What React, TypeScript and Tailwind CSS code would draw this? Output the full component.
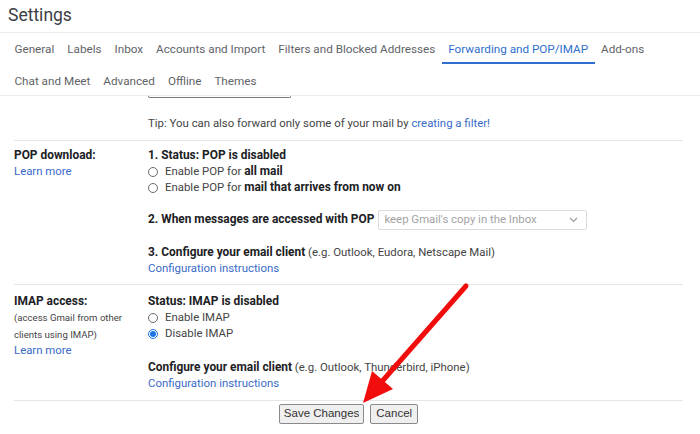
import React from "react";

const body = { fontFamily: 'Roboto, "Liberation Sans", Arial, sans-serif' };
const btn = { fontFamily: '"Liberation Sans", Arial, sans-serif' };

const tabsRow1 = [
  "General",
  "Labels",
  "Inbox",
  "Accounts and Import",
  "Filters and Blocked Addresses",
  "Forwarding and POP/IMAP",
  "Add-ons",
];
const tabsRow2 = ["Chat and Meet", "Advanced", "Offline", "Themes"];
const ACTIVE = "Forwarding and POP/IMAP";

function Tab({ label, second }: { label: string; second?: boolean }) {
  const active = label === ACTIVE;
  return (
    <div
      className={
        "h-[31px] px-[6.5px] flex items-center text-[11.7px] border-b-2 " +
        (second ? "pt-[6px] " : "pt-[5px] ") +
        (active ? "text-[#2f6fcf] border-[#2f6fcf]" : "text-[#5f6368] border-transparent")
      }
    >
      {label}
    </div>
  );
}

function Radio({ checked }: { checked?: boolean }) {
  return checked ? (
    <span className="w-[10px] h-[10px] rounded-full border border-[#1a73e8] flex items-center justify-center shrink-0">
      <span className="w-[6px] h-[6px] rounded-full bg-[#1a73e8]" />
    </span>
  ) : (
    <span className="w-[10px] h-[10px] rounded-full border border-[#6b6b6b] shrink-0" />
  );
}

function RadioRow({ checked, children }: { checked?: boolean; children: React.ReactNode }) {
  return (
    <div className="h-4 flex items-center gap-[7px]">
      <Radio checked={checked} />
      <span>{children}</span>
    </div>
  );
}

function B({ children }: { children: React.ReactNode }) {
  return <b className="text-[11.9px]">{children}</b>;
}

const link = "text-[#3a6bc8]";

export default function App() {
  return (
    <div className="relative w-[700px] h-[434px] bg-white overflow-hidden text-[#202124]" style={body}>
      {/* header */}
      <div className="h-[33px] border-b border-[#ececec] pl-[8px] flex items-center">
        <span className="text-[17.5px] text-[#3c4043] leading-none">Settings</span>
      </div>

      {/* tabs */}
      <div className="border-b border-[#ececec] pl-[8px]">
        <div className="flex">
          {tabsRow1.map((t) => (
            <Tab key={t} label={t} />
          ))}
        </div>
        <div className="flex">
          {tabsRow2.map((t) => (
            <Tab key={t} label={t} second />
          ))}
        </div>
      </div>

      {/* scrolled settings body */}
      <div className="pl-[14px] pr-[17px] text-[11.4px]">
        {/* bottom edge of the forwarding address picker, scrolled up under the tabs */}
        <div className="ml-[134px] w-[143px] h-[2px] border-x border-b border-[#7a7a7a] rounded-b-[3px]" />

        <div className="pl-[134px] h-4 flex items-center mt-[18px]">
          <span className="text-[#444]">
            Tip: You can also forward only some of your mail by{" "}
            <span className={link}>creating a filter!</span>
          </span>
        </div>

        {/* POP */}
        <div className="mt-[8px] border-t border-[#e6e6e6] pt-[7px] pb-[7px] flex">
          <div className="w-[134px] shrink-0">
            <div className="h-4 flex items-center">
              <B>POP download:</B>
            </div>
            <div className={"h-4 flex items-center " + link}>Learn more</div>
          </div>
          <div className="flex-1">
            <div className="h-4 flex items-center">
              <B>1. Status: POP is disabled</B>
            </div>
            <RadioRow>
              <span className="text-[#444]">Enable POP for </span>
              <B>all mail</B>
            </RadioRow>
            <RadioRow>
              <span className="text-[#444]">Enable POP for </span>
              <B>mail that arrives from now on</B>
            </RadioRow>
            <div className="mt-[14px] h-[20px] flex items-center gap-[4px]">
              <B>2. When messages are accessed with POP</B>
              <div className="w-[209px] h-[20px] border border-[#dcdcdc] rounded-[2px] flex items-center justify-between pl-[5px] pr-[8px]">
                <span className="text-[#a3a3a3]">keep Gmail's copy in the Inbox</span>
                <svg width="9" height="6" viewBox="0 0 9 6">
                  <path d="M1 1l3.5 3.5L8 1" fill="none" stroke="#9a9a9a" strokeWidth="1.2" />
                </svg>
              </div>
            </div>
            <div className="mt-[15px] h-4 flex items-center">
              <span>
                <B>3. Configure your email client</B>
                <span className="text-[#444]"> (e.g. Outlook, Eudora, Netscape Mail)</span>
              </span>
            </div>
            <div className={"h-4 flex items-center " + link}>Configuration instructions</div>
          </div>
        </div>

        {/* IMAP */}
        <div className="border-t border-[#e6e6e6] pt-[9px] pb-[8px] flex">
          <div className="w-[134px] shrink-0">
            <div className="h-4 flex items-center">
              <B>IMAP access:</B>
            </div>
            <div className="text-[9.6px] leading-[17px] text-[#444] -mt-[1px]">
              <div>(access Gmail from other</div>
              <div>clients using IMAP)</div>
            </div>
            <div className={"h-4 flex items-center " + link}>Learn more</div>
          </div>
          <div className="flex-1">
            <div className="h-4 flex items-center">
              <B>Status: IMAP is disabled</B>
            </div>
            <RadioRow>
              <span className="text-[#444]">Enable IMAP</span>
            </RadioRow>
            <RadioRow checked>
              <span className="text-[#444]">Disable IMAP</span>
            </RadioRow>
            <div className="mt-[18px] h-4 flex items-center">
              <span>
                <B>Configure your email client</B>
                <span className="text-[#444]"> (e.g. Outlook, Thunderbird, iPhone)</span>
              </span>
            </div>
            <div className={"h-4 flex items-center " + link}>Configuration instructions</div>
          </div>
        </div>

        {/* actions */}
        <div className="border-t border-[#e6e6e6] pt-[3px] flex justify-center gap-[6px]" style={btn}>
          <button className="h-[20px] px-[4px] text-[11.5px] text-[#333] bg-[#efefef] border border-[#8a8a8a] rounded-[2px] leading-none">
            Save Changes
          </button>
          <button className="h-[20px] px-[5px] text-[11.5px] text-[#333] bg-[#efefef] border border-[#8a8a8a] rounded-[2px] leading-none">
            Cancel
          </button>
        </div>
      </div>

      {/* red annotation arrow */}
      <svg className="absolute inset-0 pointer-events-none" width="700" height="434" viewBox="0 0 700 434">
        <line x1="466" y1="286" x2="378" y2="386" stroke="#f20d0d" strokeWidth="5" strokeLinecap="round" />
        <polygon points="363,403 393,389 372,371" fill="#f20d0d" />
      </svg>
    </div>
  );
}
